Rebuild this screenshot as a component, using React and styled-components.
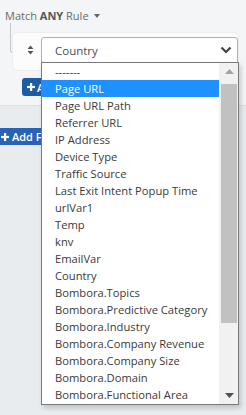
import React from "react";
import styled, { createGlobalStyle } from "styled-components";

const GlobalStyle = createGlobalStyle`
  html, body { margin: 0; padding: 0; }
  body {
    background: #e9ecef;
    font-family: "Open Sans", "Noto Sans", sans-serif;
    width: 246px;
    height: 415px;
    overflow: hidden;
  }
`;

const Page = styled.div`
  position: relative;
  width: 246px;
  height: 415px;
  overflow: hidden;
`;

const RuleSection = styled.section`
  background: #f4f5f6;
  padding: 7px 8px 9px 5px;
  border-bottom: 1px solid #dde0e3;
`;

const Header = styled.div`
  display: flex;
  align-items: center;
  height: 16px;
  font-size: 11px;
  color: #6b6b6b;
  white-space: pre;
  b { color: #555; font-weight: 700; }
`;

const Caret = styled.span`
  width: 0;
  height: 0;
  margin-left: 5px;
  margin-top: 1px;
  border-left: 3.5px solid transparent;
  border-right: 3.5px solid transparent;
  border-top: 4px solid #666;
`;

const Group = styled.div`
  display: flex;
  margin-left: 5px;
`;

const TreeLine = styled.div`
  flex: none;
  width: 2px;
  height: 29px;
  border-left: 1px solid #c8c8c8;
  border-bottom: 1px solid #c8c8c8;
  border-bottom-left-radius: 3px;
`;

const GroupBody = styled.div`
  flex: 1;
  display: flex;
  flex-direction: column;
  padding-top: 10px;
`;

const Card = styled.div`
  display: flex;
  align-items: flex-start;
  background: #fcfcfc;
  border-radius: 5px;
  padding: 4px 0 7px 14px;
  box-shadow: 0 0 0 1px #eeeeee;
`;

const Handle = styled.div`
  width: 14px;
  height: 26px;
  display: flex;
  align-items: center;
  justify-content: flex-start;
`;

const SelectWrap = styled.div`
  position: relative;
  flex: 1;
`;

const SelectBox = styled.div`
  height: 24px;
  border: 1px solid #86b7ee;
  border-radius: 3px 3px 0 0;
  background: #ffffff;
  display: flex;
  align-items: center;
  justify-content: space-between;
  padding: 0 5px 0 13px;
  font-size: 11.5px;
  color: #4a4f55;
`;

const AddRuleButton = styled.button`
  align-self: flex-start;
  box-sizing: border-box;
  margin: 8px 0 0 9px;
  height: 18px;
  border: none;
  border-radius: 3px;
  background: #1d5ba5;
  color: #fff;
  font-family: inherit;
  font-size: 11px;
  font-weight: 600;
  padding: 0 6px 0 5px;
  display: flex;
  align-items: center;
  gap: 2px;
  white-space: nowrap;
`;

const Footer = styled.div`
  padding-top: 22px;
`;

const AddFilterButton = styled.button`
  box-sizing: border-box;
  margin-left: -4px;
  height: 17px;
  border: none;
  border-radius: 3px;
  background: #2962b6;
  color: #fff;
  font-family: inherit;
  font-size: 11px;
  font-weight: 600;
  padding: 0 8px 0 5px;
  display: flex;
  align-items: center;
  gap: 3px;
  white-space: nowrap;
`;

const Dropdown = styled.div`
  position: absolute;
  top: 25px;
  left: 0;
  right: -1px;
  height: 341px;
  background: #fff;
  border: 1px solid #7a7a7a;
  box-shadow: 2px 3px 5px rgba(0, 0, 0, 0.18);
  display: flex;
  z-index: 10;
`;

const Options = styled.ul`
  list-style: none;
  margin: 0;
  padding: 0;
  flex: 1;
  overflow: hidden;
`;

const Option = styled.li`
  height: 17px;
  line-height: 17px;
  padding-left: 13px;
  font-size: 11.2px;
  white-space: nowrap;
  color: ${(p) => (p.$active ? "#ffffff" : "#3a3a3a")};
  background: ${(p) => (p.$active ? "#1e90ff" : "transparent")};
`;

const Scrollbar = styled.div`
  flex: none;
  width: 19px;
  background: #f1f1f1;
  display: flex;
  flex-direction: column;
`;

const ScrollArrow = styled.div`
  height: 17px;
  display: flex;
  align-items: center;
  justify-content: center;
  padding-left: 1px;
`;

const Track = styled.div`
  flex: 1;
  padding: 4px 1px 0 2px;
`;

const Thumb = styled.div`
  height: 239px;
  background: #c1c1c1;
`;

const Tri = ({ up, color }) => (
  <svg width="9" height="5" viewBox="0 0 9 5">
    {up ? (
      <polygon points="0,5 9,5 4.5,0" fill={color} />
    ) : (
      <polygon points="0,0 9,0 4.5,5" fill={color} />
    )}
  </svg>
);

const SortIcon = () => (
  <svg width="7" height="10" viewBox="0 0 7 10">
    <polygon points="0.5,4 6.5,4 3.5,0.5" fill="#555" />
    <polygon points="0.5,6 6.5,6 3.5,9.5" fill="#555" />
  </svg>
);

const Chevron = () => (
  <svg width="12" height="8" viewBox="0 0 12 8">
    <polyline points="1.5,1.5 6,6 10.5,1.5" fill="none" stroke="#444" strokeWidth="2.2" />
  </svg>
);

const Plus = () => (
  <svg width="8" height="8" viewBox="0 0 8 8">
    <rect x="3" y="0" width="2.2" height="8" fill="#fff" />
    <rect x="0" y="2.9" width="8" height="2.2" fill="#fff" />
  </svg>
);

const options = [
  "-------",
  "Page URL",
  "Page URL Path",
  "Referrer URL",
  "IP Address",
  "Device Type",
  "Traffic Source",
  "Last Exit Intent Popup Time",
  "urlVar1",
  "Temp",
  "knv",
  "EmailVar",
  "Country",
  "Bombora.Topics",
  "Bombora.Predictive Category",
  "Bombora.Industry",
  "Bombora.Company Revenue",
  "Bombora.Company Size",
  "Bombora.Domain",
  "Bombora.Functional Area",
];

export default function App() {
  return (
    <Page>
      <GlobalStyle />
      <RuleSection>
        <Header>
          Match <b>ANY</b> Rule<Caret />
        </Header>
        <Group>
          <TreeLine />
          <GroupBody>
            <Card>
              <Handle>
                <SortIcon />
              </Handle>
              <SelectWrap>
                <SelectBox>
                  <span>Country</span>
                  <Chevron />
                </SelectBox>
                <Dropdown>
                  <Options>
                    {options.map((o) => (
                      <Option key={o} $active={o === "Page URL"}>
                        {o}
                      </Option>
                    ))}
                  </Options>
                  <Scrollbar>
                    <ScrollArrow>
                      <Tri up color="#a3a3a3" />
                    </ScrollArrow>
                    <Track>
                      <Thumb />
                    </Track>
                    <ScrollArrow>
                      <Tri color="#505050" />
                    </ScrollArrow>
                  </Scrollbar>
                </Dropdown>
              </SelectWrap>
            </Card>
            <AddRuleButton>
              <Plus /> Add Rule
            </AddRuleButton>
          </GroupBody>
        </Group>
      </RuleSection>
      <Footer>
        <AddFilterButton>
          <Plus /> Add Filter
        </AddFilterButton>
      </Footer>
    </Page>
  );
}
